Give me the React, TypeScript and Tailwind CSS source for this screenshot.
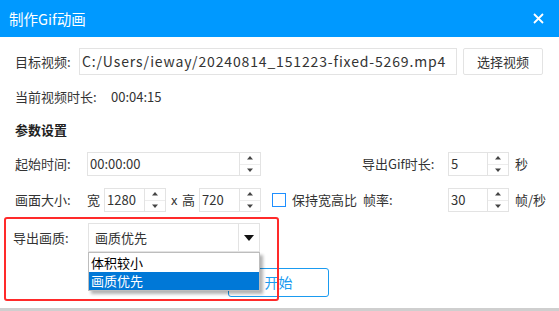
import React from "react";

const font = "font-['Noto_Sans_CJK_SC','Noto_Sans',sans-serif]";

function Arrow({ up }: { up?: boolean }) {
  return (
    <svg width="6" height="4" viewBox="0 0 6 4">
      <polygon points={up ? "0,3.5 6,3.5 3,0" : "0,0.5 6,0.5 3,4"} fill="#444" />
    </svg>
  );
}

function SpinBox({ value, w }: { value: string; w: string }) {
  return (
    <div className={`${w} h-[24px] flex border border-[#e3e3e3] bg-white`}>
      <div className="flex-1 flex items-center pl-[2px] text-[13px] text-[#333]">{value}</div>
      <div className="w-[21px] flex flex-col border-l border-[#e3e3e3]">
        <div className="flex-1 flex items-center justify-center border-b border-[#ececec]">
          <Arrow up />
        </div>
        <div className="flex-1 flex items-center justify-center">
          <Arrow />
        </div>
      </div>
    </div>
  );
}

export default function App() {
  return (
    <div className={`w-[559px] h-[311px] bg-[#f3f3f3] overflow-hidden ${font}`}>
      <div className="h-[37px] bg-[#0099ff] flex items-center justify-between pl-[9px] pr-[15px]">
        <span className="text-white text-[14.5px]">制作Gif动画</span>
        <svg width="11" height="11" viewBox="0 0 11 11">
          <path d="M1 1 L10 10 M10 1 L1 10" stroke="white" strokeWidth="1.8" />
        </svg>
      </div>

      <div className="relative h-[271px] bg-white text-[13px] text-[#333]">
        <div className="pt-[11px] pl-[15px] flex items-center h-[38px] box-border">
          <span className="w-[64px]">目标视频:</span>
          <div className="w-[378px] h-[27px] border border-[#e3e3e3] flex items-center pl-[2px] text-[14px] tracking-[0.85px] whitespace-nowrap overflow-hidden">
            C:/Users/ieway/20240814_151223-fixed-5269.mp4
          </div>
          <div className="ml-[6px] w-[80px] h-[27px] border border-[#e3e3e3] rounded-[2px] flex items-center justify-center">
            选择视频
          </div>
        </div>

        <div className="mt-[12px] pl-[15px] h-[20px] flex items-center">
          <span className="w-[96px]">当前视频时长:</span>
          <span>00:04:15</span>
        </div>

        <div className="mt-[13px] pl-[15px] h-[20px] flex items-center font-bold text-[#222]">参数设置</div>

        <div className="mt-[12px] pl-[15px] h-[24px] flex items-center">
          <span className="w-[72px]">起始时间:</span>
          <SpinBox value="00:00:00" w="w-[174px]" />
          <span className="ml-[101px] w-[86px]">导出Gif时长:</span>
          <SpinBox value="5" w="w-[61px]" />
          <span className="ml-[6px]">秒</span>
        </div>

        <div className="mt-[12px] pl-[15px] h-[24px] flex items-center">
          <span className="w-[72px]">画面大小:</span>
          <span className="w-[17px]">宽</span>
          <SpinBox value="1280" w="w-[62px]" />
          <span className="ml-[5px] w-[11px]">x</span>
          <span className="w-[17px]">高</span>
          <SpinBox value="720" w="w-[62px]" />
          <div className="ml-[11px] w-[14px] h-[14px] border border-[#1e8fff]" />
          <span className="ml-[6px] w-[71px]">保持宽高比</span>
          <span className="w-[85px]">帧率:</span>
          <SpinBox value="30" w="w-[61px]" />
          <span className="ml-[6px]">帧/秒</span>
        </div>

        <div className="mt-[11px] pl-[13px] h-[29px] flex items-center">
          <span className="w-[75px] self-start pt-[5px]">导出画质:</span>
          <div className="w-[172px] h-[29px] border border-[#e3e3e3] flex">
            <div className="flex-1 flex items-center pl-[6px]">画质优先</div>
            <div className="w-[21px] border-l border-[#e3e3e3] flex items-center justify-center">
              <svg width="10" height="6" viewBox="0 0 10 6">
                <polygon points="0,0 10,0 5,6" fill="#111" />
              </svg>
            </div>
          </div>
        </div>

        <div className="mt-[16px] pl-[228px]">
          <div className="w-[101px] h-[29px] border border-[#1a9bf0] rounded-[3px] flex items-center justify-center text-[#1a9bf0] text-[14px]">
            开始
          </div>
        </div>

        <div className="absolute left-[88px] top-[215px] w-[172px] h-[39px] bg-white border border-[#bdbdbd] shadow-[3px_3px_3px_rgba(0,0,0,0.3)] text-[13px]">
          <div className="h-[19px] flex items-center pl-[2px] text-black">体积较小</div>
          <div className="h-[18px] flex items-center pl-[2px] bg-[#0078d7] text-white">画质优先</div>
        </div>

        <div className="absolute left-[4px] top-[180px] w-[275px] h-[84px] border-2 border-[#ff2a2a] rounded-[3px]" />
      </div>
      <div className="h-[3px] bg-[#cfcfcf]" />
    </div>
  );
}
